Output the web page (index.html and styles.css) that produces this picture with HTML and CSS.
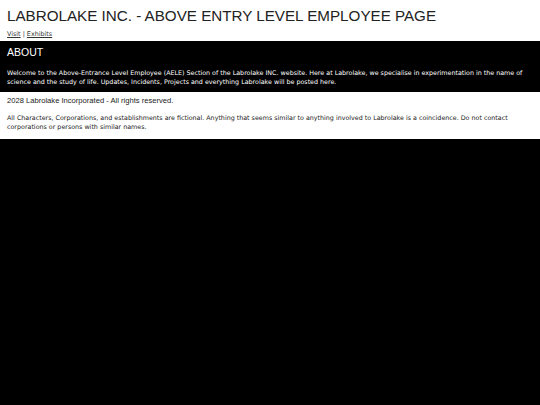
FILE: index.html
```html
<!DOCTYPE html>
<html lang="en">
<head>
    <meta charset="UTF-8">
    <title>Labrolake INC. - AELE</title>
    <link rel="stylesheet" href="styles.css">
</head>
<body>
    <div class="header">
        <h1>LABROLAKE INC. - ABOVE ENTRY LEVEL EMPLOYEE PAGE</h1>
        <div class="nav"><a href="#">Visit</a> | <a href="#">Exhibits</a></div>
    </div>

    <div class="about">
        <h2>ABOUT</h2>
        <p>Welcome to the Above-Entrance Level Employee (AELE) Section of the Labrolake INC. website. Here at Labrolake, we specialise in experimentation in the name of science and the study of life. Updates, Incidents, Projects and everything Labrolake will be posted here.</p>
    </div>

    <div class="footer">
        <h3>2028 Labrolake Incorporated - All rights reserved.</h3>
        <p>All Characters, Corporations, and establishments are fictional. Anything that seems similar to anything involved to Labrolake is a coincidence. Do not contact corporations or persons with similar names.</p>
    </div>
</body>
</html>
```

FILE: styles.css
```css
body {
    margin: 0;
    background: #000;
    font-family: 'DejaVu Sans', Verdana, sans-serif;
}

h1, h2, h3 {
    font-family: 'Liberation Sans', Arial, sans-serif;
    font-weight: normal;
    margin: 0;
}

p {
    margin: 0;
    font-size: 6.35px;
    line-height: 9px;
}

.header {
    background: #fff;
    color: #222;
    padding: 7px 7px 2.5px;
}

.header h1 {
    font-size: 15.2px;
    line-height: 17px;
    margin-bottom: 7px;
}

.nav {
    font-size: 6.4px;
    line-height: 7.5px;
    color: #333;
}

.nav a {
    color: #333;
}

.about {
    color: #fff;
    padding: 5px 2px 6px 7px;
}

.about h2 {
    font-size: 10.5px;
    line-height: 12px;
}

.about p {
    margin-top: 10px;
}

.footer {
    background: #fff;
    color: #222;
    padding: 4.5px 2px 8px 7px;
}

.footer h3 {
    font-size: 7.6px;
    line-height: 8.6px;
}

.footer p {
    margin-top: 8px;
}
```
